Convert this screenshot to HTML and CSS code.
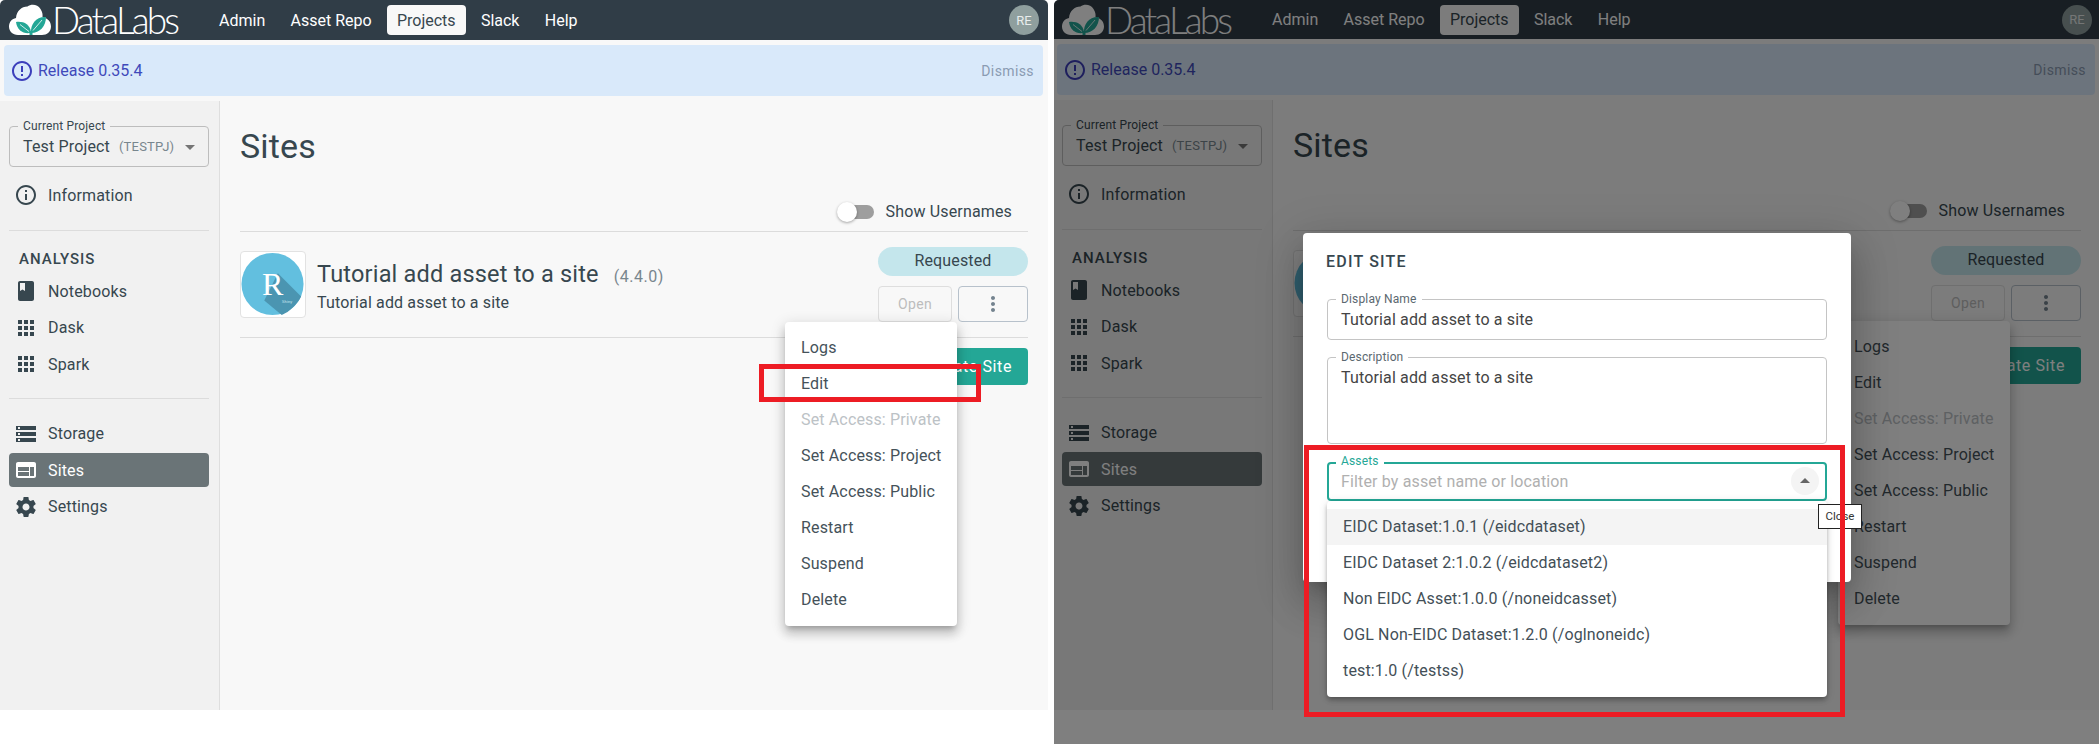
FILE: index.html
```html
<!DOCTYPE html>
<html lang="en">
<head>
    <meta charset="UTF-8">
    <title>DataLabs - Sites</title>
    <link rel="stylesheet" href="styles.css">
</head>
<body>
    <!-- shared icons -->
    <svg class="icon-defs" aria-hidden="true">
        <symbol id="i-info" viewBox="0 0 24 24"><path d="M11 7h2v2h-2zm0 4h2v6h-2zm1-9C6.48 2 2 6.48 2 12s4.48 10 10 10 10-4.48 10-10S17.52 2 12 2zm0 18c-4.41 0-8-3.59-8-8s3.59-8 8-8 8 3.59 8 8-3.59 8-8 8z"/></symbol>
        <symbol id="i-error" viewBox="0 0 24 24"><path d="M11 15h2v2h-2zm0-8h2v6h-2zm.99-5C6.47 2 2 6.48 2 12s4.47 10 9.99 10C17.52 22 22 17.52 22 12S17.52 2 11.99 2zM12 20c-4.42 0-8-3.58-8-8s3.58-8 8-8 8 3.58 8 8-3.58 8-8 8z"/></symbol>
        <symbol id="i-book" viewBox="0 0 24 24"><path d="M18 2H6c-1.1 0-2 .9-2 2v16c0 1.1.9 2 2 2h12c1.1 0 2-.9 2-2V4c0-1.1-.9-2-2-2zM6 4h5v8l-2.5-1.5L6 12V4z"/></symbol>
        <symbol id="i-apps" viewBox="0 0 24 24"><path d="M4 8h4V4H4v4zm6 12h4v-4h-4v4zm-6 0h4v-4H4v4zm0-6h4v-4H4v4zm6 0h4v-4h-4v4zm6-10v4h4V4h-4zm-6 4h4V4h-4v4zm6 6h4v-4h-4v4zm0 6h4v-4h-4v4z"/></symbol>
        <symbol id="i-storage" viewBox="0 0 24 24"><path d="M2 20h20v-4H2v4zm2-3h2v2H4v-2zM2 4v4h20V4H2zm4 3H4V5h2v2zm-4 7h20v-4H2v4zm2-3h2v2H4v-2z"/></symbol>
        <symbol id="i-web" viewBox="0 0 24 24"><path d="M20 4H4c-1.1 0-1.99.9-1.99 2L2 18c0 1.1.9 2 2 2h16c1.1 0 2-.9 2-2V6c0-1.1-.9-2-2-2zm-5 14H4v-4h11v4zm0-5H4V9h11v4zm5 5h-4V9h4v9z"/></symbol>
        <symbol id="i-settings" viewBox="0 0 24 24"><path d="M19.43 12.98c.04-.32.07-.64.07-.98s-.03-.66-.07-.98l2.11-1.65c.19-.15.24-.42.12-.64l-2-3.46c-.12-.22-.39-.3-.61-.22l-2.49 1c-.52-.4-1.08-.73-1.69-.98l-.38-2.65C14.46 2.18 14.25 2 14 2h-4c-.25 0-.46.18-.49.42l-.38 2.65c-.61.25-1.17.59-1.69.98l-2.49-1c-.23-.09-.49 0-.61.22l-2 3.46c-.13.22-.07.49.12.64l2.11 1.65c-.04.32-.07.65-.07.98s.03.66.07.98l-2.11 1.65c-.19.15-.24.42-.12.64l2 3.46c.12.22.39.3.61.22l2.49-1c.52.4 1.08.73 1.69.98l.38 2.65c.03.24.24.42.49.42h4c.25 0 .46-.18.49-.42l.38-2.65c.61-.25 1.17-.59 1.69-.98l2.49 1c.23.09.49 0 .61-.22l2-3.46c.12-.22.07-.49-.12-.64l-2.11-1.65zM12 15.5c-1.93 0-3.5-1.57-3.5-3.5s1.57-3.5 3.5-3.5 3.5 1.57 3.5 3.5-1.57 3.5-3.5 3.5z"/></symbol>
        <symbol id="i-more" viewBox="0 0 24 24"><path d="M12 8c1.1 0 2-.9 2-2s-.9-2-2-2-2 .9-2 2 .9 2 2 2zm0 2c-1.1 0-2 .9-2 2s.9 2 2 2 2-.9 2-2-.9-2-2-2zm0 6c-1.1 0-2 .9-2 2s.9 2 2 2 2-.9 2-2-.9-2-2-2z"/></symbol>
        <symbol id="i-down" viewBox="0 0 24 24"><path d="M7 10l5 5 5-5z"/></symbol>
        <symbol id="i-up" viewBox="0 0 24 24"><path d="M7 14l5-5 5 5z"/></symbol>
        <symbol id="i-cloud" viewBox="0 0 42 32">
            <path fill="#fff" d="M9 31C3.500 31 0 27.200 0 22.500 0 18 3 14.800 7 14 7.500 7 12.500 2.500 18.500 2.500 22 0 28.500 0 31.500 5 33.500 8 33.800 10.500 33.500 13 38.500 14 42 17.500 42 22.500 42 27.500 38 31 33 31z"/>
            <path fill="#24a796" d="M21 29C14 30 8 26 7 18 14 17 21 20 22 28z"/>
            <path fill="#24a796" d="M22 29C21 20 28 12 37 13 37 22 31 29 22 29z"/>
            <path fill="#24a796" d="M20.500 27h3v4h-3z"/>
            <path fill="none" stroke="#fff" stroke-width=".8" d="M11 20.500 20 27.500M33 16 24 26.500"/>
        </symbol>
        <symbol id="i-shiny-bg" viewBox="0 0 66 67">
            <circle cx="32.500" cy="33" r="32" fill="#62bfdf"/>
            <path fill="#4b95b1" d="M24 50 38 22 62 46C58 54 50 62 42 65z"/>
        </symbol>
    </svg>

    <!-- first capture: site menu open -->
    <section class="panel panel-left">
        <div class="app">
            <header class="topbar">
                <div class="logo">
                    <svg class="logo-cloud"><use href="#i-cloud"/></svg>
                    <span class="logo-name">DataLabs</span>
                </div>
                <nav class="topnav">
                    <a class="topnav-item">Admin</a>
                    <a class="topnav-item">Asset Repo</a>
                    <a class="topnav-item topnav-active">Projects</a>
                    <a class="topnav-item">Slack</a>
                    <a class="topnav-item">Help</a>
                </nav>
                <div class="avatar">RE</div>
            </header>
            <div class="banner">
                <svg class="banner-icon"><use href="#i-error"/></svg>
                <span class="banner-text">Release 0.35.4</span>
                <span class="banner-dismiss">Dismiss</span>
            </div>
            <div class="layout">
                <aside class="sidebar">
                    <div class="project-select">
                        <span class="project-label">Current Project</span>
                        <span class="project-name">Test Project</span>
                        <span class="project-key">(TESTPJ)</span>
                        <svg class="project-arrow"><use href="#i-down"/></svg>
                    </div>
                    <a class="nav-item nav-info"><svg class="nav-icon"><use href="#i-info"/></svg>Information</a>
                    <hr class="side-divider">
                    <div class="side-heading">ANALYSIS</div>
                    <a class="nav-item"><svg class="nav-icon"><use href="#i-book"/></svg>Notebooks</a>
                    <a class="nav-item"><svg class="nav-icon"><use href="#i-apps"/></svg>Dask</a>
                    <a class="nav-item"><svg class="nav-icon"><use href="#i-apps"/></svg>Spark</a>
                    <hr class="side-divider side-divider-low">
                    <a class="nav-item"><svg class="nav-icon"><use href="#i-storage"/></svg>Storage</a>
                    <a class="nav-item nav-active"><svg class="nav-icon"><use href="#i-web"/></svg>Sites</a>
                    <a class="nav-item"><svg class="nav-icon"><use href="#i-settings"/></svg>Settings</a>
                </aside>
                <main class="main">
                    <h1 class="page-title">Sites</h1>
                    <div class="toggle-row">
                        <span class="toggle"><span class="toggle-thumb"></span></span>
                        <span>Show Usernames</span>
                    </div>
                    <div class="site-row">
                        <div class="site-logo">
                            <svg class="site-logo-bg"><use href="#i-shiny-bg"/></svg>
                            <span class="shiny-r">R</span>
                            <span class="shiny-name">Shiny</span>
                        </div>
                        <div class="site-info">
                            <div class="site-title">Tutorial add asset to a site <span class="site-version">(4.4.0)</span></div>
                            <div class="site-desc">Tutorial add asset to a site</div>
                        </div>
                        <div class="site-actions">
                            <div class="status-pill">Requested</div>
                            <div class="site-buttons">
                                <button class="btn-open">Open</button>
                                <button class="btn-more"><svg class="more-icon"><use href="#i-more"/></svg></button>
                            </div>
                        </div>
                    </div>
                    <div class="create-row"><button class="btn-create">Create Site</button></div>
                    <ul class="menu">
                        <li>Logs</li>
                        <li>Edit</li>
                        <li class="menu-disabled">Set Access: Private</li>
                        <li>Set Access: Project</li>
                        <li>Set Access: Public</li>
                        <li>Restart</li>
                        <li>Suspend</li>
                        <li>Delete</li>
                    </ul>
                </main>
            </div>
        </div>
        <div class="mark mark-edit"></div>
    </section>

    <!-- second capture: edit dialog open -->
    <section class="panel panel-right">
        <div class="app">
            <header class="topbar">
                <div class="logo">
                    <svg class="logo-cloud"><use href="#i-cloud"/></svg>
                    <span class="logo-name">DataLabs</span>
                </div>
                <nav class="topnav">
                    <a class="topnav-item">Admin</a>
                    <a class="topnav-item">Asset Repo</a>
                    <a class="topnav-item topnav-active">Projects</a>
                    <a class="topnav-item">Slack</a>
                    <a class="topnav-item">Help</a>
                </nav>
                <div class="avatar">RE</div>
            </header>
            <div class="banner">
                <svg class="banner-icon"><use href="#i-error"/></svg>
                <span class="banner-text">Release 0.35.4</span>
                <span class="banner-dismiss">Dismiss</span>
            </div>
            <div class="layout">
                <aside class="sidebar">
                    <div class="project-select">
                        <span class="project-label">Current Project</span>
                        <span class="project-name">Test Project</span>
                        <span class="project-key">(TESTPJ)</span>
                        <svg class="project-arrow"><use href="#i-down"/></svg>
                    </div>
                    <a class="nav-item nav-info"><svg class="nav-icon"><use href="#i-info"/></svg>Information</a>
                    <hr class="side-divider">
                    <div class="side-heading">ANALYSIS</div>
                    <a class="nav-item"><svg class="nav-icon"><use href="#i-book"/></svg>Notebooks</a>
                    <a class="nav-item"><svg class="nav-icon"><use href="#i-apps"/></svg>Dask</a>
                    <a class="nav-item"><svg class="nav-icon"><use href="#i-apps"/></svg>Spark</a>
                    <hr class="side-divider side-divider-low">
                    <a class="nav-item"><svg class="nav-icon"><use href="#i-storage"/></svg>Storage</a>
                    <a class="nav-item nav-active"><svg class="nav-icon"><use href="#i-web"/></svg>Sites</a>
                    <a class="nav-item"><svg class="nav-icon"><use href="#i-settings"/></svg>Settings</a>
                </aside>
                <main class="main">
                    <h1 class="page-title">Sites</h1>
                    <div class="toggle-row">
                        <span class="toggle"><span class="toggle-thumb"></span></span>
                        <span>Show Usernames</span>
                    </div>
                    <div class="site-row">
                        <div class="site-logo">
                            <svg class="site-logo-bg"><use href="#i-shiny-bg"/></svg>
                        </div>
                        <div class="site-info"></div>
                        <div class="site-actions">
                            <div class="status-pill">Requested</div>
                            <div class="site-buttons">
                                <button class="btn-open">Open</button>
                                <button class="btn-more"><svg class="more-icon"><use href="#i-more"/></svg></button>
                            </div>
                        </div>
                    </div>
                    <div class="create-row"><button class="btn-create">Create Site</button></div>
                    <ul class="menu">
                        <li>Logs</li>
                        <li>Edit</li>
                        <li class="menu-disabled">Set Access: Private</li>
                        <li>Set Access: Project</li>
                        <li>Set Access: Public</li>
                        <li>Restart</li>
                        <li>Suspend</li>
                        <li>Delete</li>
                    </ul>
                </main>
            </div>
        </div>
        <div class="backdrop"></div>
        <div class="dialog">
            <h2 class="dialog-title">EDIT SITE</h2>
            <div class="field field-name">
                <span class="field-label">Display Name</span>
                Tutorial add asset to a site
            </div>
            <div class="field field-desc">
                <span class="field-label">Description</span>
                Tutorial add asset to a site
            </div>
            <div class="field field-assets">
                <span class="field-label">Assets</span>
                <span class="placeholder">Filter by asset name or location</span>
                <span class="collapse"><svg class="collapse-icon"><use href="#i-up"/></svg></span>
            </div>
            <ul class="options">
                <li class="option-hover">EIDC Dataset:1.0.1 (/eidcdataset)</li>
                <li>EIDC Dataset 2:1.0.2 (/eidcdataset2)</li>
                <li>Non EIDC Asset:1.0.0 (/noneidcasset)</li>
                <li>OGL Non-EIDC Dataset:1.2.0 (/oglnoneidc)</li>
                <li>test:1.0 (/testss)</li>
            </ul>
        </div>
        <div class="tooltip">Close</div>
        <div class="mark mark-assets"></div>
    </section>
</body>
</html>
```

FILE: styles.css
```css
* { box-sizing: border-box; }
body { margin: 0; width: 2099px; height: 744px; overflow: hidden; display: flex; gap: 6px; background: #fff; font-family: Roboto, Arial, sans-serif; font-size: 16px; letter-spacing: .15px; color: #37474f; }
.icon-defs { position: absolute; width: 0; height: 0; }
ul { list-style: none; margin: 0; padding: 0; }

/* the two captures */
.panel { position: relative; height: 744px; overflow: hidden; border-top-left-radius: 5px; }
.panel-left { width: 1048px; border-top-right-radius: 5px; }
.panel-right { width: 1045px; }
.app { height: 710px; display: flex; flex-direction: column; background: #f8f8f8; }
.panel-right .app { width: 1048px; margin-left: -1px; }
.panel-right .topbar { height: 39px; }
.panel-right .banner { margin-right: 6px; }

/* top bar */
.topbar { height: 40px; flex: none; display: flex; align-items: center; padding: 0 9px; background: #303d47; color: #fff; }
.logo { width: 200px; height: 40px; flex: none; display: flex; align-items: center; }
.logo-cloud { width: 42px; height: 32px; flex: none; }
.logo-name { margin-left: 1px; padding-right: 6px; font-family: Lato, sans-serif; font-weight: 300; font-size: 37px; letter-spacing: -2.9px; line-height: 40px; white-space: nowrap; }
.topnav { display: flex; gap: 5.3px; }
.topnav-item { height: 30px; padding: 0 10px; display: flex; align-items: center; border-radius: 4px; letter-spacing: 0; }
.topnav-active { background: #f8f8f8; color: #37474f; }
.avatar { width: 30px; height: 30px; margin-left: auto; border-radius: 50%; background: #8f9f9e; color: #e8eded; font-size: 13px; display: flex; align-items: center; justify-content: center; }

/* release banner */
.banner { height: 51px; flex: none; margin: 5px 5px 5px 4px; padding: 0 9px 0 6px; display: flex; align-items: center; background: #d9e9fa; border-radius: 4px; }
.banner-icon { width: 24px; height: 24px; fill: #3c3fbb; flex: none; }
.banner-text { margin-left: 4px; color: #4049ba; letter-spacing: 0; }
.banner-dismiss { margin-left: auto; font-size: 14px; letter-spacing: .4px; color: #8a9bb2; }

.layout { flex: 1; display: flex; min-height: 0; }

/* sidebar */
.sidebar { width: 220px; flex: none; padding: 25px 10px 0 9px; background: #f1f1f1; border-right: 1px solid #dedede; }
.project-select { position: relative; height: 41px; display: flex; align-items: center; padding: 0 12px 0 13px; border: 1px solid #bdbdbd; border-radius: 4px; }
.project-label { position: absolute; left: 8px; top: -8px; padding: 0 5px; background: #f1f1f1; font-size: 12px; line-height: 14px; white-space: nowrap; }
.project-name { white-space: nowrap; }
.project-key { margin-left: 9px; font-size: 13px; letter-spacing: .2px; color: #78868e; white-space: nowrap; }
.project-arrow { width: 24px; height: 24px; margin: 0 -6px 0 auto; fill: #757575; flex: none; }
.nav-item { height: 34px; margin-bottom: 2.5px; padding-left: 5px; display: flex; align-items: center; gap: 10px; border-radius: 4px; }
.nav-icon { width: 24px; height: 24px; fill: currentColor; flex: none; }
.nav-info { margin-top: 11px; margin-bottom: 0; color: #37474f; }
.nav-active { background: #6a7477; color: #fff; }
.side-divider { margin: 18px 0 0; border: 0; border-top: 1px solid #dcdcdc; }
.side-divider-low { margin-top: 17px; margin-bottom: 17.500px; }
.side-heading { height: 43px; padding: 19px 0 0 10px; font-size: 15px; font-weight: 500; letter-spacing: 1px; line-height: 18px; }

/* main column */
.main { position: relative; flex: 1; padding: 25px 20px 0 20px; }
.page-title { margin: 0; height: 40px; font-size: 34px; font-weight: 400; line-height: 40px; }
.toggle-row { height: 66px; padding: 27px 16px 0 0; display: flex; justify-content: flex-end; align-items: center; gap: 12px; border-bottom: 1px solid #dcdcdc; line-height: 36px; }
.toggle { position: relative; width: 35px; height: 14px; border-radius: 7px; background: #9e9e9e; }
.toggle-thumb { position: absolute; left: -2px; top: -3px; width: 20px; height: 20px; border-radius: 50%; background: #fff; box-shadow: 0 1px 3px rgba(0,0,0,.35); }

.site-row { height: 106px; display: flex; padding-top: 19px; border-bottom: 1px solid #dcdcdc; }
.site-logo { position: relative; width: 66px; height: 67px; flex: none; background: #fff; border: 1px solid #e2e2e2; border-radius: 4px; overflow: hidden; }
.site-logo-bg { width: 64px; height: 65px; display: block; }
.shiny-r { position: absolute; left: 21px; top: 14px; font-family: "Liberation Serif", serif; font-size: 32px; line-height: 36px; color: #fff; }
.shiny-name { position: absolute; left: 41px; top: 47px; font-size: 4px; line-height: 6px; color: #cfe8f2; }
.site-info { flex: 1; padding: 7px 0 0 11px; }
.site-title { font-size: 23.500px; letter-spacing: .2px; line-height: 32px; white-space: nowrap; }
.site-version { margin-left: 9px; font-size: 16px; letter-spacing: .5px; color: #78868e; }
.site-desc { line-height: 22px; margin-top: -1px; }
.site-actions { width: 150px; margin-top: -4px; flex: none; }
.status-pill { height: 29px; border-radius: 15px; background: #c4e6ec; text-align: center; line-height: 27px; }
.site-buttons { display: flex; gap: 6px; margin-top: 10px; }
.site-buttons button { height: 36px; background: transparent; border-radius: 4px; padding: 0; font: inherit; font-size: 14px; }
.btn-open { width: 74px; border: 1px solid #dedede; color: #bdbdbd; letter-spacing: .4px; }
.btn-more { width: 70px; border: 1px solid #b7c1cb; display: flex; align-items: center; justify-content: center; }
.more-icon { width: 24px; height: 24px; fill: #74838f; }

.create-row { display: flex; justify-content: flex-end; margin-top: 10px; }
.btn-create { width: 130px; height: 37px; padding: 0 16px 0 0; text-align: right; border: 0; border-radius: 4px; background: #24a796; color: #fff; font: inherit; letter-spacing: .6px; }

.menu { position: absolute; left: 565px; top: 221px; width: 172px; padding: 8px 0; background: #fff; border-radius: 4px; box-shadow: 0 5px 5px -3px rgba(0,0,0,.2), 0 8px 10px 1px rgba(0,0,0,.14), 0 3px 14px 2px rgba(0,0,0,.12); }
.menu li { height: 36px; padding-left: 16px; line-height: 36px; white-space: nowrap; color: #45525a; }
.menu .menu-disabled { color: #bcc2c6; }

/* red marks over the captures */
.mark { position: absolute; border: 5px solid #ed1c24; }
.mark-edit { left: 759px; top: 364px; width: 222px; height: 38px; }
.mark-assets { left: 250px; top: 445px; width: 541px; height: 272px; }

/* dialog capture */
.backdrop { position: absolute; inset: 0; background: rgba(0,0,0,.5); }
.dialog { position: absolute; left: 249px; top: 233px; width: 548px; height: 349px; padding: 0 24px; background: #fff; border-radius: 4px; box-shadow: 0 11px 15px -7px rgba(0,0,0,.2), 0 24px 38px 3px rgba(0,0,0,.14), 0 9px 46px 8px rgba(0,0,0,.12); }
.dialog-title { margin: 0 0 0 -1px; padding-top: 19px; height: 66px; font-size: 16px; font-weight: 500; letter-spacing: 1.2px; line-height: 19px; }
.field { position: relative; width: 500px; padding: 9px 13px 0; border: 1px solid #c4c4c4; border-radius: 4px; color: #444; line-height: 22px; }
.field-label { position: absolute; left: 8px; top: -8px; padding: 0 5px; background: #fff; font-size: 12px; line-height: 14px; color: #5b6870; }
.field-name { height: 41px; }
.field-desc { height: 87px; margin-top: 17px; }
.field-assets { height: 39px; margin-top: 18px; border: 2px solid #24a796; padding: 7px 12px 0; }
.field-assets .field-label { left: 7px; top: -10px; color: #24a796; }
.placeholder { color: #b0b0b0; }
.collapse { position: absolute; right: 6px; top: 3px; width: 28px; height: 28px; border-radius: 50%; background: #f4f4f4; display: flex; align-items: center; justify-content: center; }
.collapse-icon { width: 24px; height: 24px; fill: #666; }
.options { position: absolute; left: 24px; top: 268px; width: 500px; padding: 8px 0; background: #fff; border-radius: 4px; box-shadow: 0 2px 4px -1px rgba(0,0,0,.2), 0 4px 5px rgba(0,0,0,.14), 0 1px 10px rgba(0,0,0,.12); }
.options li { height: 36px; padding-left: 16px; line-height: 36px; color: #434f57; white-space: nowrap; }
.options .option-hover { background: #f4f4f4; }
.tooltip { position: absolute; left: 764px; top: 504px; width: 44px; height: 25px; background: #fff; border: 1px solid #222; font-size: 11.5px; letter-spacing: 0; color: #333; text-align: center; line-height: 23px; }
```
